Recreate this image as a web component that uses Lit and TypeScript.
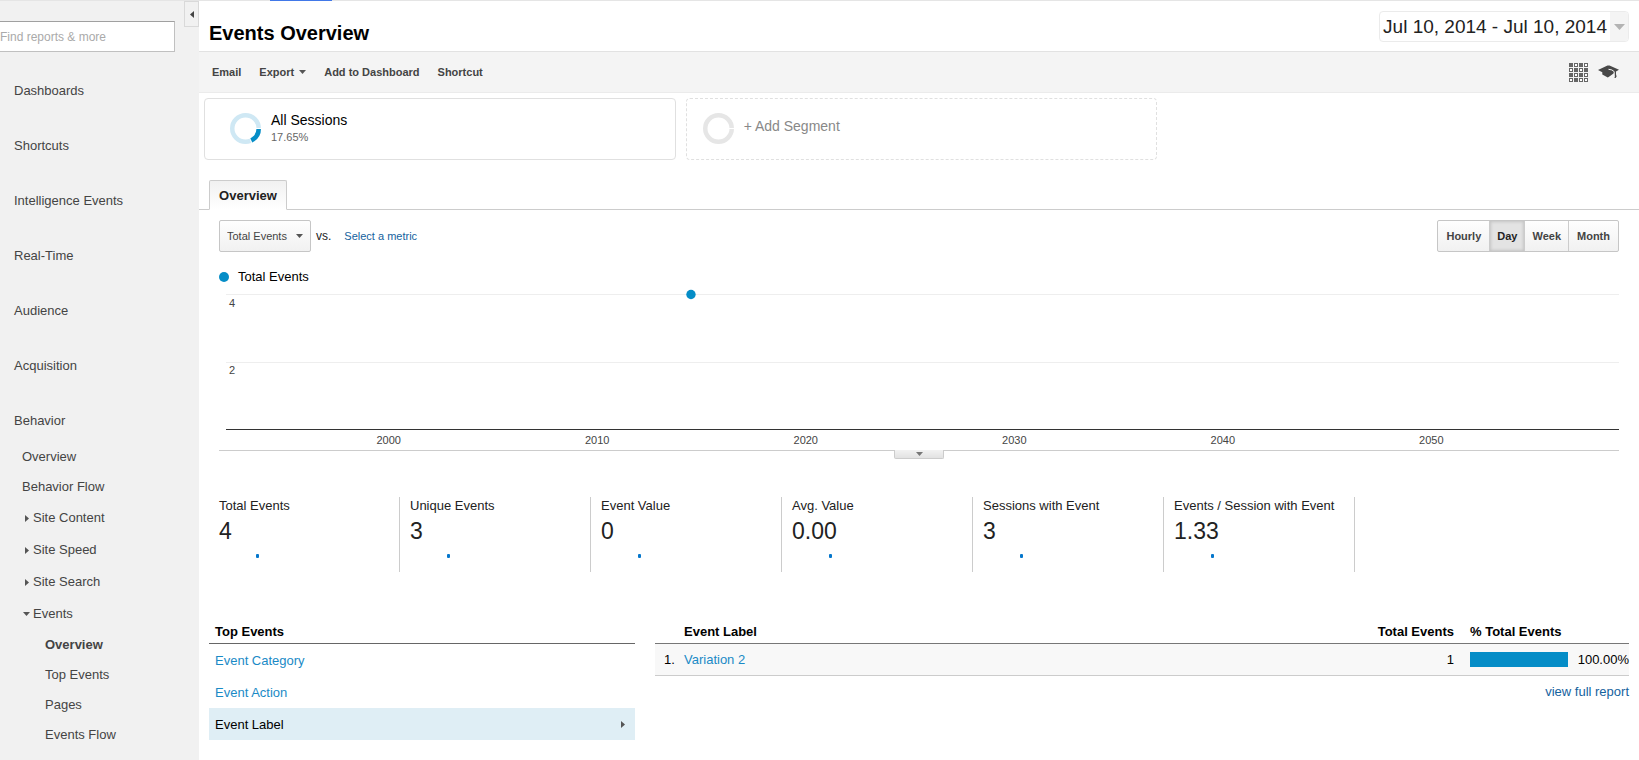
import { LitElement, html, svg, css, nothing } from "lit";
import { customElement, state } from "lit/decorators.js";
import { classMap } from "lit/directives/class-map.js";

const base = css`
  *,
  *::before,
  *::after {
    box-sizing: border-box;
  }
  a {
    text-decoration: none;
    color: inherit;
  }
  button,
  input,
  select {
    font: inherit;
    color: inherit;
    margin: 0;
    padding: 0;
    border: 0;
    background: none;
    border-radius: 0;
  }
  button {
    cursor: pointer;
  }
  ul {
    list-style: none;
    margin: 0;
    padding: 0;
  }
`;

const caretDown = html`<svg width="7" height="4" viewBox="0 0 7 4" aria-hidden="true">
  <path d="M0 0h7L3.5 4z" fill="#555" />
</svg>`;

@customElement("report-nav")
class ReportNav extends LitElement {
  static styles = [
    base,
    css`
      :host {
        display: block;
        background: #f1f1f1;
        color: #444;
        font-size: 13px;
      }
      .top {
        display: flex;
        justify-content: space-between;
        align-items: flex-start;
      }
      .search {
        width: 175px;
        height: 31px;
        margin-top: 20px;
        background: #fff;
        border: solid #c0c0c0;
        border-width: 1px 1px 1px 0;
        border-top-color: #a0a0a0;
        font-size: 12px;
        outline: none;
      }
      .search::placeholder {
        color: #aaa;
        opacity: 1;
      }
      .collapse {
        display: flex;
        align-items: center;
        justify-content: center;
        width: 15px;
        height: 26px;
        border: 1px solid #d9d9d9;
      }
      nav {
        padding-top: 11px;
      }
      .section {
        display: block;
        padding-left: 14px;
        line-height: 55px;
      }
      .open {
        line-height: 42px;
        padding-top: 7px;
      }
      .item {
        display: block;
        padding-left: 22px;
        line-height: 30px;
      }
      .group {
        display: grid;
        grid-template-columns: 10px 1fr;
        align-items: center;
        padding-left: 23px;
        line-height: 32px;
      }
      .leaf {
        display: block;
        padding-left: 45px;
        line-height: 30px;
      }
      .current {
        font-weight: bold;
      }
    `,
  ];

  render() {
    return html`
      <div class="top">
        <input class="search" type="search" placeholder="Find reports &amp; more" aria-label="Find reports and more" />
        <button class="collapse" aria-label="Collapse navigation">
          <svg width="4" height="7" viewBox="0 0 4 7"><path d="M4 0v7L0 3.500z" fill="#444" /></svg>
        </button>
      </div>
      <nav>
        <ul>
          ${["Dashboards", "Shortcuts", "Intelligence Events", "Real-Time", "Audience", "Acquisition"].map(
            (t) => html`<li><a class="section" href="#">${t}</a></li>`
          )}
          <li>
            <a class="section open" href="#">Behavior</a>
            <ul>
              ${["Overview", "Behavior Flow"].map((t) => html`<li><a class="item" href="#">${t}</a></li>`)}
              ${["Site Content", "Site Speed", "Site Search"].map(
                (t) => html`<li>
                  <a class="group" href="#">
                    <svg width="7" height="7" viewBox="0 0 7 7"><path d="M2 0v7l4-3.500z" fill="#555" /></svg>${t}
                  </a>
                </li>`
              )}
              <li>
                <a class="group" href="#">${caretDown}Events</a>
                <ul>
                  ${["Overview", "Top Events", "Pages", "Events Flow"].map(
                    (t, i) => html`<li><a class=${classMap({ leaf: true, current: i === 0 })} href="#">${t}</a></li>`
                  )}
                </ul>
              </li>
            </ul>
          </li>
        </ul>
      </nav>
    `;
  }
}

@customElement("segment-bar")
class SegmentBar extends LitElement {
  static styles = [
    base,
    css`
      :host {
        display: grid;
        grid-template-columns: repeat(3, 1fr);
        gap: 10px;
        padding: 5px 0 0 5px;
      }
      .card {
        display: flex;
        align-items: center;
        gap: 10px;
        height: 62px;
        padding: 0 0 1px 25px;
        border: 1px solid #e0e0e0;
        border-radius: 4px;
        background: #fff;
        text-align: left;
      }
      .add {
        border-style: dashed;
        padding-left: 16px;
        color: #888;
        font-size: 14px;
      }
      .add span {
        padding-bottom: 6px;
      }
      .name {
        font-size: 14px;
        line-height: 17px;
        color: #000;
      }
      .share {
        font-size: 11px;
        line-height: 16px;
        color: #666;
      }
    `,
  ];

  private ring(track: string, share: number) {
    const c = 2 * Math.PI * 13.25;
    return html`<svg width="31" height="31" viewBox="0 0 31 31" aria-hidden="true">
      <circle cx="15.500" cy="15.500" r="13.250" fill="none" stroke=${track} stroke-width="4.500" />
      ${share
        ? svg`<circle cx="15.500" cy="15.500" r="13.250" fill="none" stroke="#fff" stroke-width="4.500"
            stroke-dasharray="${share * c + 1} ${c}" />
          <circle cx="15.500" cy="15.500" r="13.250" fill="none" stroke="#058dc7" stroke-width="4.500"
            stroke-dasharray="${share * c} ${c}" />`
        : nothing}
      <path d="M26 15.500h5" stroke="#fff" stroke-width="1" />
    </svg>`;
  }

  render() {
    return html`
      <button class="card">
        ${this.ring("#cfe8f4", 0.1765)}
        <div>
          <div class="name">All Sessions</div>
          <div class="share">17.65%</div>
        </div>
      </button>
      <button class="card add">${this.ring("#e6e6e6", 0)}<span>+ Add Segment</span></button>
    `;
  }
}

@customElement("event-chart")
class EventChart extends LitElement {
  static styles = [
    base,
    css`
      :host {
        display: block;
      }
      .legend {
        display: flex;
        align-items: center;
        gap: 9px;
        line-height: 20px;
        font-size: 13px;
        color: #000;
      }
      .plot {
        padding-left: 7px;
        border-bottom: 1px solid #ccc;
      }
      .plot svg {
        display: block;
        width: 100%;
        height: 163px;
        overflow: visible;
      }
      text {
        font-size: 11px;
        fill: #444;
      }
      .handle {
        display: flex;
        align-items: center;
        justify-content: center;
        width: 50px;
        height: 9px;
        margin: -1px auto 0;
        border: 1px solid #ccc;
        border-top: 0;
        border-radius: 0 0 2px 2px;
        background: linear-gradient(#f2f2f2, #e2e2e2);
      }
    `,
  ];

  private readonly from = 1992.2;
  private readonly to = 2059;

  private x(year: number) {
    return `${(((year - this.from) / (this.to - this.from)) * 100).toFixed(2)}%`;
  }

  render() {
    return html`
      <div class="legend">
        <svg width="10" height="10" aria-hidden="true"><circle cx="5" cy="5" r="5" fill="#058dc7" /></svg>Total Events
      </div>
      <div class="plot">
        <svg role="img" aria-label="Total Events over time">
          <line x1="0" x2="100%" y1="7.500" y2="7.500" stroke="#eee" />
          <line x1="0" x2="100%" y1="75.500" y2="75.500" stroke="#eee" />
          <line x1="0" x2="100%" y1="142.500" y2="142.500" stroke="#333" />
          <text x="3" y="20">4</text>
          <text x="3" y="87">2</text>
          ${[2000, 2010, 2020, 2030, 2040, 2050].map(
            (y) => svg`<text x=${this.x(y)} y="157" text-anchor="middle">${y}</text>`
          )}
          <circle cx=${this.x(2014.5)} cy="7.500" r="4.700" fill="#058dc7" />
        </svg>
      </div>
      <button class="handle" aria-label="Show annotations">
        <svg width="7" height="4" viewBox="0 0 7 4"><path d="M0 0h7L3.500 4z" fill="#777" /></svg>
      </button>
    `;
  }
}

@customElement("app-root")
class AppRoot extends LitElement {
  @state() private period = "Day";

  static styles = [
    base,
    css`
      :host {
        display: block;
        min-height: 100vh;
        background: #fff;
        color: #222;
        font: 13px "Liberation Sans", Arial, sans-serif;
      }
      .strip {
        height: 1px;
        background: #e5e5e5;
        padding-left: 270px;
      }
      .mark {
        width: 62px;
        height: 1px;
        background: #4178e8;
      }
      .shell {
        display: grid;
        grid-template-columns: 199px minmax(0, 1fr);
        min-height: calc(100vh - 1px);
      }
      .head {
        display: flex;
        justify-content: space-between;
        align-items: flex-start;
        height: 51px;
        padding: 10px 10px 0;
        border-bottom: 1px solid #e2e2e2;
      }
      h1 {
        margin: 0;
        padding-top: 9px;
        font-size: 20px;
        line-height: 26px;
        color: #000;
      }
      .date {
        display: flex;
        height: 31px;
        border: 1px solid #ebebeb;
        border-radius: 4px;
        font-size: 19px;
        line-height: 29px;
        color: #222;
        overflow: hidden;
      }
      .date span {
        padding: 0 3px;
      }
      .drop {
        display: flex;
        align-items: center;
        justify-content: center;
        width: 18px;
        height: 29px;
        background: #f4f4f4;
      }
      .tools {
        display: flex;
        align-items: center;
        height: 41px;
        padding: 0 20px 0 13px;
        gap: 18px;
        background: #f4f4f4;
        border-bottom: 1px solid #ebebeb;
        font-size: 11px;
        font-weight: bold;
        color: #444;
      }
      .menu {
        display: flex;
        align-items: center;
        gap: 5px;
      }
      .icons {
        display: flex;
        align-items: center;
        gap: 10px;
        margin-left: auto;
      }
      .icons button {
        display: flex;
      }
      .tabs {
        display: flex;
        height: 30px;
        margin-top: 20px;
        padding-left: 10px;
        border-bottom: 1px solid #ccc;
      }
      .tab {
        height: 30px;
        width: 78px;
        border: 1px solid #ccc;
        border-bottom-color: #fff;
        border-radius: 2px 2px 0 0;
        background: linear-gradient(#f1f1f1, #fff);
        font-weight: bold;
      }
      .body {
        padding: 10px 20px 0;
      }
      .controls {
        display: flex;
        align-items: center;
        height: 32px;
        margin-bottom: 15px;
        font-size: 11px;
      }
      .metric {
        display: grid;
        align-items: center;
      }
      .metric select {
        grid-area: 1 / 1;
        appearance: none;
        width: 92px;
        height: 32px;
        padding-left: 7px;
        border: 1px solid #c6c6c6;
        border-radius: 2px;
        background: linear-gradient(#fefefe, #f1f1f1);
        color: #444;
      }
      .metric svg {
        grid-area: 1 / 1;
        justify-self: end;
        margin-right: 8px;
        pointer-events: none;
      }
      .vs {
        font-size: 12px;
        padding: 0 13px 0 5px;
      }
      .link {
        color: #15629e;
      }
      .periods {
        display: flex;
        margin-left: auto;
        border: 1px solid #c6c6c6;
        border-radius: 2px;
        background: linear-gradient(#fefefe, #f1f1f1);
        font-weight: bold;
        color: #444;
      }
      .periods button {
        height: 30px;
        padding: 0 7px;
      }
      .periods button:first-child,
      .periods button:last-child {
        padding: 0 8px;
      }
      .periods button + button {
        border-left: 1px solid #ccc;
      }
      .periods .on {
        background: #e3e3e3;
        box-shadow: inset 0 0 3px 1px #c4c4c4;
        color: #222;
      }
      .scores {
        display: flex;
        margin-top: 38px;
      }
      .score {
        width: 191px;
        height: 75px;
        padding-left: 10px;
        border-right: 1px solid #ccc;
      }
      .score:first-child {
        width: 181px;
        padding-left: 0;
      }
      .label {
        line-height: 17px;
        white-space: nowrap;
      }
      .value {
        font-size: 23px;
        line-height: 34px;
      }
      .spark {
        display: block;
        margin: 6px 0 0 37px;
      }
      .tables {
        display: grid;
        grid-template-columns: 426px minmax(0, 1fr);
        gap: 20px;
        padding: 48px 10px 0;
        color: #000;
      }
      h2 {
        margin: 0;
        height: 24px;
        padding-left: 6px;
        border-bottom: 1px solid #666;
        font-size: 13px;
        line-height: 24px;
      }
      .dim {
        display: flex;
        align-items: center;
        justify-content: space-between;
        height: 32px;
        padding: 0 10px 0 6px;
        color: #1a8ac6;
      }
      .chosen {
        background: #dfeef5;
        color: #000;
      }
      table {
        width: 100%;
        border-collapse: separate;
        border-spacing: 0;
        table-layout: fixed;
      }
      th,
      td {
        padding: 0;
        text-align: left;
      }
      th {
        height: 24px;
        border-bottom: 1px solid #777;
        line-height: 23px;
      }
      td {
        height: 32px;
        background: #f8f8f8;
        border-bottom: 1px solid #ccc;
      }
      .rank {
        width: 29px;
        padding-left: 9px;
      }
      .num {
        width: 120px;
        text-align: right;
      }
      .pct {
        width: 175px;
        padding-left: 16px;
      }
      .meter {
        display: flex;
        align-items: center;
        justify-content: space-between;
      }
      .track {
        width: 98px;
        height: 15px;
      }
      .fill {
        height: 15px;
        background: #058dc7;
      }
      .name {
        color: #1a8ac6;
      }
      .more {
        text-align: right;
        line-height: 31px;
      }
    `,
  ];

  private gridIcon() {
    const rows = ["1010", "0101", "1010", "0100"];
    return html`<svg width="19" height="19" viewBox="0 0 19 19" aria-hidden="true">
      ${rows.flatMap((row, y) =>
        [...row].map((c, x) =>
          c === "1"
            ? svg`<rect x=${x * 5} y=${y * 5} width="4" height="4" fill="#666" />`
            : svg`<rect x=${x * 5 + 0.5} y=${y * 5 + 0.5} width="3" height="3" fill="#fff" stroke="#666" />`
        )
      )}
    </svg>`;
  }

  render() {
    const scores = [
      ["Total Events", "4"],
      ["Unique Events", "3"],
      ["Event Value", "0"],
      ["Avg. Value", "0.00"],
      ["Sessions with Event", "3"],
      ["Events / Session with Event", "1.33"],
    ];
    const dims = ["Event Category", "Event Action", "Event Label"];
    const share = 100;
    return html`
      <div class="strip"><div class="mark"></div></div>
      <div class="shell">
        <report-nav></report-nav>
        <main>
          <header class="head">
            <h1>Events Overview</h1>
            <button class="date">
              <span>Jul 10, 2014 - Jul 10, 2014</span>
              <div class="drop">
                <svg width="11" height="6" viewBox="0 0 11 6"><path d="M0 0h11L5.500 6z" fill="#b3b3b3" /></svg>
              </div>
            </button>
          </header>
          <div class="tools">
            <button>Email</button>
            <button class="menu">Export ${caretDown}</button>
            <button>Add to Dashboard</button>
            <button>Shortcut</button>
            <div class="icons">
              <button aria-label="Data grid">${this.gridIcon()}</button>
              <button aria-label="Education">
                <svg width="21" height="14" viewBox="0 0 21 14">
                  <path d="M0 5L9.500 0.500h2L21 4.800l-3 1.600v2.800l.6 2.300-1 1.500h-1l-.4-5L11 11.800 9.800 12.500 4.300 9.500V7.300z" fill="#484848" />
                  <path d="M10.500 4.300q3.800.1 5.700 2.300v5.500" fill="none" stroke="#f4f4f4" stroke-width="1" />
                </svg>
              </button>
            </div>
          </div>
          <segment-bar></segment-bar>
          <div class="tabs" role="tablist">
            <button class="tab" role="tab" aria-selected="true">Overview</button>
          </div>
          <div class="body">
            <div class="controls">
              <div class="metric">
                <select aria-label="Metric">
                  <option>Total Events</option>
                </select>
                ${caretDown}
              </div>
              <span class="vs">vs.</span>
              <a class="link" href="#">Select a metric</a>
              <div class="periods">
                ${["Hourly", "Day", "Week", "Month"].map(
                  (p) => html`<button
                    class=${classMap({ on: p === this.period })}
                    aria-pressed=${p === this.period}
                    @click=${() => (this.period = p)}
                  >
                    ${p}
                  </button>`
                )}
              </div>
            </div>
            <event-chart></event-chart>
            <div class="scores">
              ${scores.map(
                ([label, value]) => html`<div class="score">
                  <div class="label">${label}</div>
                  <div class="value">${value}</div>
                  <svg class="spark" width="3" height="4" aria-hidden="true">
                    <rect width="3" height="4" rx="1" fill="#0577cc" />
                  </svg>
                </div>`
              )}
            </div>
          </div>
          <div class="tables">
            <section>
              <h2>Top Events</h2>
              <ul>
                ${dims.map(
                  (d, i) => html`<li>
                    <a class=${classMap({ dim: true, chosen: i === 2 })} href="#">
                      ${d}
                      ${i === 2
                        ? html`<svg width="4" height="7" viewBox="0 0 4 7"><path d="M0 0v7l4-3.500z" fill="#555" /></svg>`
                        : nothing}
                    </a>
                  </li>`
                )}
              </ul>
            </section>
            <section>
              <table>
                <thead>
                  <tr>
                    <th class="rank"></th>
                    <th>Event Label</th>
                    <th class="num">Total Events</th>
                    <th class="pct">% Total Events</th>
                  </tr>
                </thead>
                <tbody>
                  <tr>
                    <td class="rank">1.</td>
                    <td><a class="name" href="#">Variation 2</a></td>
                    <td class="num">1</td>
                    <td class="pct">
                      <div class="meter">
                        <div class="track"><div class="fill" style="width:${share}%"></div></div>
                        100.00%
                      </div>
                    </td>
                  </tr>
                </tbody>
              </table>
              <div class="more"><a class="link" href="#">view full report</a></div>
            </section>
          </div>
        </main>
      </div>
    `;
  }
}
